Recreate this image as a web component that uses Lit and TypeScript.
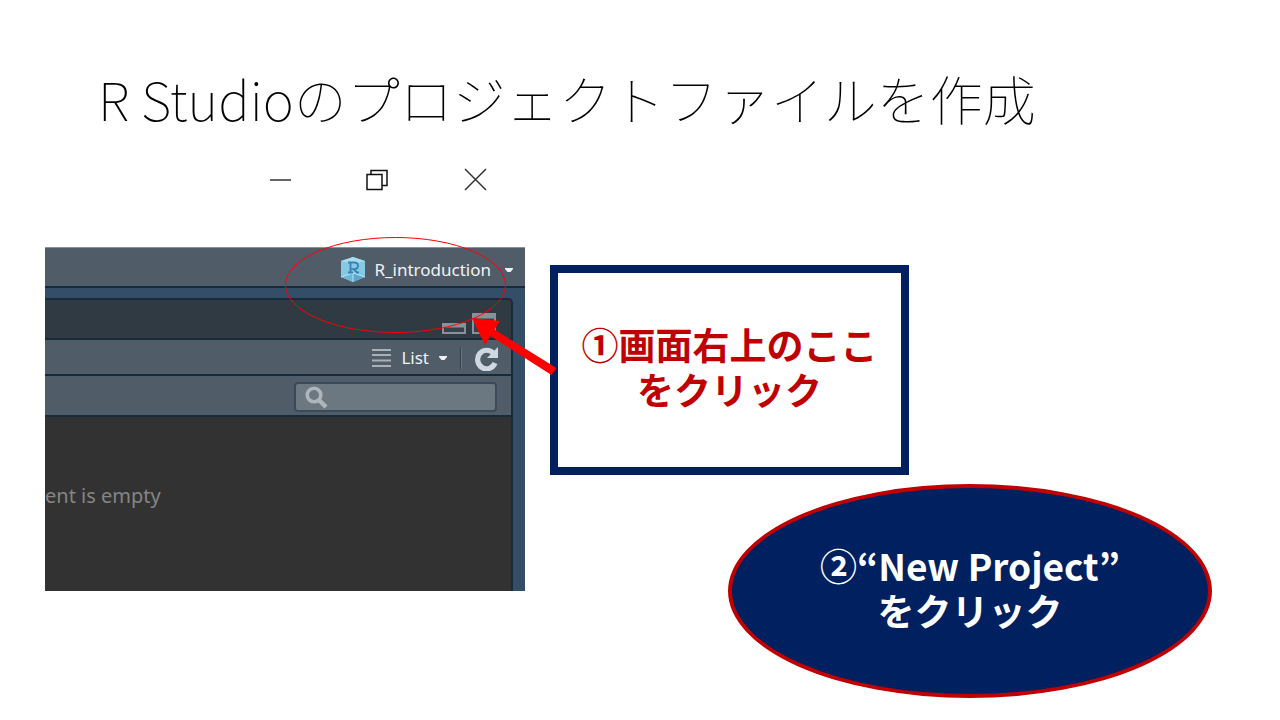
import { LitElement, html, svg, css } from "lit";
import { customElement } from "lit/decorators.js";

const caret = svg`<path d="M0 0h8v1L5.500 4h-3L0 1z" fill="#eef1f3"/>`;

@customElement("rstudio-pane")
class RstudioPane extends LitElement {
  static styles = css`
    :host {
      display: block;
      overflow: hidden;
      background: #334e66;
      color: #f0f2f4;
      font-family: "Noto Sans", "Open Sans", sans-serif;
      font-size: 17px;
      line-height: 24px;
    }
    button {
      display: flex;
      align-items: center;
      padding: 0;
      border: 0;
      background: none;
      color: inherit;
      font: inherit;
    }
    svg {
      display: block;
      flex: none;
    }
    .bar {
      display: flex;
      align-items: center;
      justify-content: flex-end;
      box-sizing: border-box;
      background: #505d68;
      border-bottom: 2px solid #172b3d;
    }
    .project-bar {
      height: 41px;
      margin-bottom: 10px;
      padding: 5px 12px 0 0;
      border-top: 1px solid #8b939a;
    }
    .project {
      gap: 8px;
    }
    .project svg:last-child {
      margin-left: 6px;
    }
    .pane {
      margin-right: 12px;
      border: solid #172b3d;
      border-width: 2px 2px 0 0;
      border-top-right-radius: 5px;
      overflow: hidden;
      background: #323232;
    }
    .tabs {
      height: 40px;
      padding-right: 15px;
      gap: 6px;
      background: #303a43;
      align-items: flex-end;
    }
    .tabs button {
      padding-bottom: 4px;
    }
    .tools {
      height: 36px;
      padding: 2px 12px 0 0;
    }
    .list {
      gap: 10px;
    }
    .rule {
      width: 1px;
      height: 22px;
      margin: 0 13px;
      background: #35414b;
      border-right: 1px solid #67737d;
    }
    .filter {
      height: 41px;
      padding: 2px 14px 0 0;
    }
    .search {
      display: flex;
      align-items: center;
      box-sizing: border-box;
      width: 203px;
      height: 30px;
      padding: 2px 0 0 9px;
      gap: 6px;
      border: 2px solid #394a5a;
      border-radius: 4px;
      background: #6c7881;
    }
    .search input {
      min-width: 0;
      flex: 1;
      padding: 0;
      border: 0;
      outline: 0;
      background: none;
      color: inherit;
      font: inherit;
    }
    .empty {
      margin: 0;
      padding: 64px 0 80px;
      color: #858585;
      font-size: 20px;
      line-height: 30px;
    }
  `;

  render() {
    return html`
      <div class="bar project-bar">
        <button class="project">
          <svg width="26" height="25" viewBox="0 0 26 25">
            <path d="M13 0l12 4v16l-12 5L1 20V4z" fill="#86c9e3"/>
            <path d="M13 0l12 4-12 3L1 4z" fill="#a6dcec"/>
            <path d="M13 16v9L1 20z" fill="#6db8d6"/>
            <path d="M13 16v9l12-5z" fill="#5aa9cb"/>
            <path d="M13 16L1 20M13 16l12 4M13 16v9" stroke="#b4e4f1" stroke-width="1"/>
            <path d="M8 5.500h6q4 0 4 3.300t-4 3.300h-3.500M10.500 5.500v10M8 15.500h5M13.500 12l3.500 3.500h2" fill="none" stroke="#3a7fb5" stroke-width="1.800"/>
          </svg>
          <span>R_introduction</span>
          <svg width="8" height="4">${caret}</svg>
        </button>
      </div>
      <div class="pane">
        <div class="bar tabs">
          <button aria-label="Minimize pane">
            <svg width="24" height="11" viewBox="0 0 24 11">
              <rect x="1" y="1" width="22" height="9" fill="#37424b" stroke="#87919a" stroke-width="2"/>
              <path d="M1 2.500h22" stroke="#87919a" stroke-width="4"/>
            </svg>
          </button>
          <button aria-label="Maximize pane">
            <svg width="24" height="21" viewBox="0 0 24 21">
              <rect x="1" y="1" width="22" height="19" fill="#37424b" stroke="#87919a" stroke-width="2"/>
              <path d="M1 3h22" stroke="#87919a" stroke-width="5"/>
            </svg>
          </button>
        </div>
        <div class="bar tools">
          <button class="list">
            <svg width="19" height="18" viewBox="0 0 19 18">
              <path d="M0 1h19M0 6h19M0 11.500h19M0 17h19" stroke="#a9b1b7" stroke-width="1.800"/>
            </svg>
            <span>List</span>
            <svg width="8" height="4">${caret}</svg>
          </button>
          <span class="rule"></span>
          <button aria-label="Refresh">
            <svg width="24" height="25" viewBox="0 0 24 25">
              <path d="M18.500 7.500A9 9.300 0 1 0 20 17" fill="none" stroke="#cfd8e1" stroke-width="5.200"/>
              <path d="M23 1v11H12z" fill="#cfd8e1"/>
            </svg>
          </button>
        </div>
        <div class="bar filter">
          <label class="search">
            <svg width="23" height="23" viewBox="0 0 23 23">
              <circle cx="9" cy="9" r="6.800" fill="none" stroke="#aeb6bc" stroke-width="3.600"/>
              <path d="M14 14l7 7" stroke="#aeb6bc" stroke-width="4.500"/>
            </svg>
            <input type="text" aria-label="Search" />
          </label>
        </div>
        <p class="empty">ent is empty</p>
      </div>
    `;
  }
}

@customElement("app-root")
class AppRoot extends LitElement {
  static styles = css`
    :host {
      display: block;
      min-height: 100vh;
      background: #fff;
      font-family: "Noto Sans CJK JP", sans-serif;
    }
    .title {
      margin: 0;
      padding: 66px 98px 32px;
      color: #000;
      font-size: 53px;
      font-weight: 100;
      line-height: 64px;
    }
    .content {
      display: grid;
      grid-template-columns: minmax(0, 480fr) minmax(0, 662fr);
      column-gap: 25px;
      padding: 0 68px 22px 45px;
    }
    .capture {
      position: relative;
      z-index: 1;
    }
    .window {
      display: flex;
      justify-content: flex-end;
      gap: 74px;
      padding: 6px 38px 55px 0;
    }
    .window button {
      padding: 0;
      border: 0;
      background: none;
    }
    .window svg {
      display: block;
    }
    .marks {
      position: absolute;
      top: 70px;
      right: -35px;
      pointer-events: none;
    }
    .steps {
      display: flex;
      flex-direction: column;
      gap: 9px;
      padding-top: 103px;
      color: #c00000;
      font-size: 37px;
      font-weight: 700;
      line-height: 45px;
      text-align: center;
    }
    .step {
      box-sizing: border-box;
      margin: 0;
    }
    .box {
      width: 359px;
      padding: 49px 0 55px;
      border: 8px solid #002060;
      background: #fff;
    }
    .oval {
      align-self: flex-end;
      width: 484px;
      padding: 55px 0 61px;
      border: 4px solid #c00000;
      border-radius: 50%;
      background: #002060;
      color: #fff;
    }
  `;

  render() {
    return html`
      <main>
        <h1 class="title">R Studioのプロジェクトファイルを作成</h1>
        <div class="content">
          <section class="capture">
            <div class="window">
              <button aria-label="Minimize">
                <svg width="24" height="24"><path d="M3 12h21" stroke="#333" stroke-width="1.500"/></svg>
              </button>
              <button aria-label="Restore">
                <svg width="24" height="24" fill="none" stroke="#111" stroke-width="1.500">
                  <path d="M2 6.500h15v15h-15zM6 6.500v-4h16v15h-5"/>
                </svg>
              </button>
              <button aria-label="Close">
                <svg width="24" height="24"><path d="M2 1l21 21M23 1L2 22" stroke="#333" stroke-width="1.500"/></svg>
              </button>
            </div>
            <rstudio-pane></rstudio-pane>
            <svg class="marks" width="280" height="150" viewBox="280 232 280 150">
              <ellipse cx="395.500" cy="285" rx="110" ry="47.500" fill="none" stroke="#f00" stroke-width="1"/>
              <path d="M472 318l28 3-5.500 8.500 62 38.500-5 7-61-39-5.500 9z" fill="#f00"/>
            </svg>
          </section>
          <section class="steps">
            <p class="step box">①画面右上のここ<br />をクリック</p>
            <p class="step oval">②“New Project”<br />をクリック</p>
          </section>
        </div>
      </main>
    `;
  }
}
